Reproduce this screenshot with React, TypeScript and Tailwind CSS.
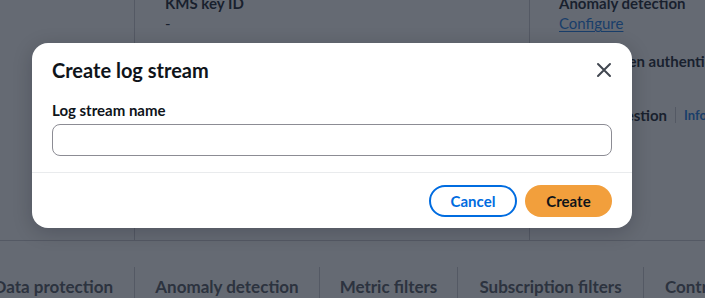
import React from 'react'

const FONT = { fontFamily: 'Lato, "Noto Sans", "Open Sans", sans-serif' }

function CloseIcon() {
  return (
    <svg viewBox="0 0 16 16" className="w-4 h-4" fill="none" stroke="#414750" strokeWidth={2} strokeLinecap="round">
      <path d="M2 2l12 12M14 2L2 14" />
    </svg>
  )
}

const tabs = [
  { label: 'Data protection', w: 'w-[135px] flex justify-end pr-[21px]' },
  { label: 'Anomaly detection', w: 'w-[185px] text-center' },
  { label: 'Metric filters', w: 'w-[138px] text-center' },
  { label: 'Subscription filters', w: 'w-[186px] text-center' },
  { label: 'Contributor insights', w: 'w-[200px] pl-[21px]' },
]

export default function App() {
  return (
    <div className="relative w-[705px] h-[298px] overflow-hidden bg-white" style={FONT}>
      {/* page under the modal */}
      <div className="flex flex-col">
        <div className="flex h-[248px] -mt-[7px] border-b border-[#c6c6cd]">
          <div className="w-[135px] shrink-0 border-r border-[#c6c6cd]" />
          <div className="w-[395px] shrink-0 border-r border-[#c6c6cd] pl-[30px] text-[15px] leading-5 text-[#000716]">
            <div className="font-bold">KMS key ID</div>
            <div>-</div>
          </div>
          <div className="flex-1 min-w-0 pl-[29px] text-[15px] leading-5 text-[#000716] whitespace-nowrap">
            <div className="font-bold">Anomaly detection</div>
            <div>
              <span className="text-[#006ce0] underline underline-offset-2">Configure</span>
            </div>
            <div className="mt-[18px] ml-[46px] font-bold">Token authentication</div>
            <div>-</div>
            <div className="mt-[14px] flex items-center">
              <span className="w-[108px] shrink-0 flex justify-end font-bold">Log ingestion</span>
              <span className="ml-2 h-4 w-px shrink-0 bg-[#c6c6cd]" />
              <span className="ml-2 text-[13px] font-bold text-[#006ce0]">Info</span>
            </div>
          </div>
        </div>
        <div className="flex mt-[26px] whitespace-nowrap">
          {tabs.map((t, i) => (
            <div
              key={t.label}
              className={`${t.w} shrink-0 h-[40px] pt-[10px] text-[17px] leading-5 font-bold text-[#424650] ${i < tabs.length - 1 ? 'border-r border-[#c6c6cd]' : ''}`}
            >
              {t.label}
            </div>
          ))}
        </div>
      </div>

      {/* overlay + modal */}
      <div className="absolute inset-0 bg-[rgba(35,43,55,0.7)] pt-[43px] pl-[32px]">
        <div className="w-[600px] bg-white rounded-2xl shadow-[0_4px_20px_rgba(0,7,22,0.2)]">
          <div className="flex items-start justify-between px-5 pt-[15px] pb-[18px]">
            <h2 className="text-xl leading-6 font-bold text-[#0f141a]">Create log stream</h2>
            <button className="-mr-1 p-1">
              <CloseIcon />
            </button>
          </div>
          <div className="px-5 pb-4">
            <div className="text-[15px] leading-5 font-bold text-[#0f141a] mb-1">Log stream name</div>
            <input className="block w-full h-8 rounded-lg border border-[#8c8c94] px-3 text-sm outline-none" />
          </div>
          <div className="border-t border-[#e9ebed] flex justify-end gap-2 px-5 pt-3 pb-[11px]">
            <button className="h-8 w-[88px] rounded-full border-2 border-[#006ce0] text-[#006ce0] text-[15px] font-bold">
              Cancel
            </button>
            <button className="h-8 w-[87px] rounded-full bg-[#f29f3c] text-[#0f141a] text-[15px] font-bold">
              Create
            </button>
          </div>
        </div>
      </div>
    </div>
  )
}
